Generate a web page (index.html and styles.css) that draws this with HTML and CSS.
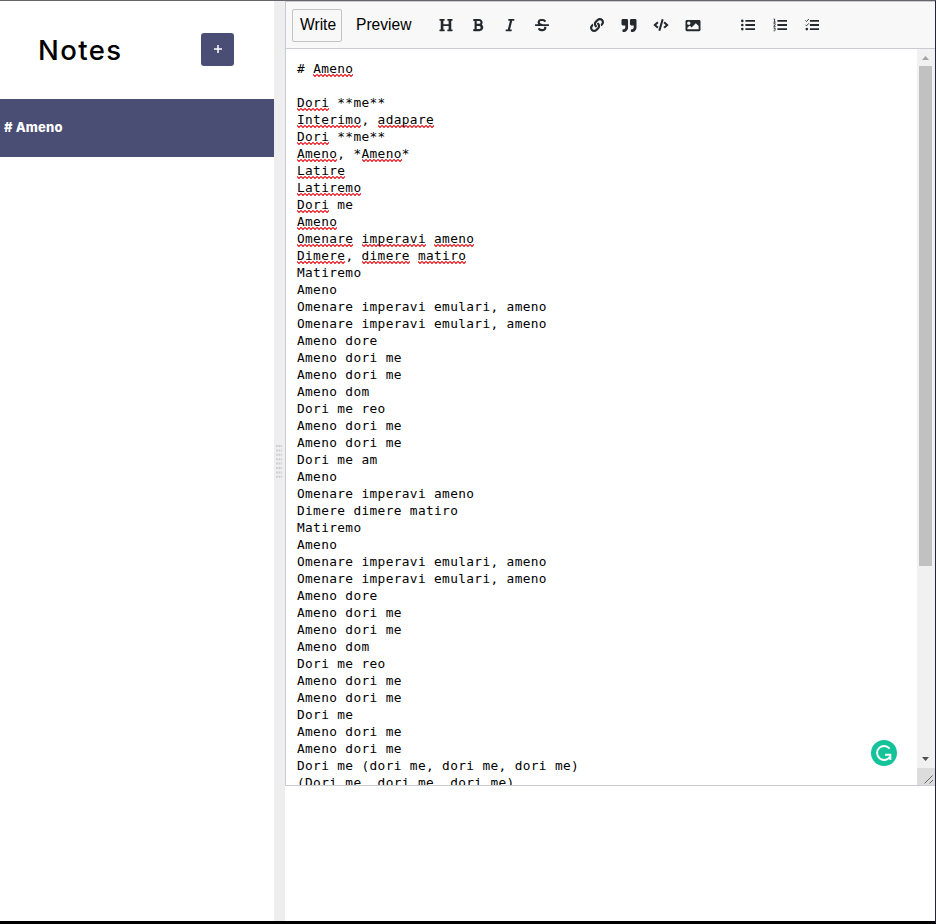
FILE: index.html
```html
<!DOCTYPE html>
<html lang="en">
<head>
<meta charset="utf-8">
<title>Notes</title>
<link rel="stylesheet" href="styles.css">
</head>
<body>
<main class="app">
  <aside class="sidebar">
    <header class="sidebar-header"><h1>Notes</h1><button class="new-note" aria-label="New note"><svg viewBox="0 0 8 8"><path d="M4 0v8M0 4h8"/></svg></button></header>
    <div class="note-title"># Ameno</div>
  </aside>
  <div class="gutter"><svg viewBox="0 0 6 34"><path d="M1 0V34M3.5 0V34M6 0V34"/></svg></div>
  <section class="pane">
    <div class="editor">
      <div class="toolbar">
        <button class="tab selected">Write</button><button class="tab">Preview</button>
        <div class="group">
          <svg viewBox="0 0 512 512"><path d="M448 96v320h32a16 16 0 0 1 16 16v32a16 16 0 0 1-16 16H320a16 16 0 0 1-16-16v-32a16 16 0 0 1 16-16h32V288H160v128h32a16 16 0 0 1 16 16v32a16 16 0 0 1-16 16H32a16 16 0 0 1-16-16v-32a16 16 0 0 1 16-16h32V96H32a16 16 0 0 1-16-16V48a16 16 0 0 1 16-16h160a16 16 0 0 1 16 16v32a16 16 0 0 1-16 16h-32v128h192V96h-32a16 16 0 0 1-16-16V48a16 16 0 0 1 16-16h160a16 16 0 0 1 16 16v32a16 16 0 0 1-16 16z"/></svg>
          <svg viewBox="0 0 384 512"><path d="M333.49 238a122 122 0 0 0 27-65.21C367.87 96.49 308 32 233.42 32H34a16 16 0 0 0-16 16v48a16 16 0 0 0 16 16h31.87v288H34a16 16 0 0 0-16 16v48a16 16 0 0 0 16 16h209.32c70.8 0 134.14-51.75 141-122.4 4.74-48.45-16.39-92.06-50.83-119.6zM145.66 112h87.76a48 48 0 0 1 0 96h-87.76zm87.76 288h-87.76V288h87.76a56 56 0 0 1 0 112z"/></svg>
          <svg viewBox="0 0 320 512"><path d="M320 48v32a16 16 0 0 1-16 16h-62.76l-80 320H208a16 16 0 0 1 16 16v32a16 16 0 0 1-16 16H16a16 16 0 0 1-16-16v-32a16 16 0 0 1 16-16h62.76l80-320H112a16 16 0 0 1-16-16V48a16 16 0 0 1 16-16h192a16 16 0 0 1 16 16z"/></svg>
          <svg viewBox="0 0 512 512"><path d="M496 224H293.9l-87.17-26.83A43.55 43.55 0 0 1 219.55 112h66.79A49.89 49.89 0 0 1 331 139.58a16 16 0 0 0 21.46 7.15l42.94-21.47a16 16 0 0 0 7.16-21.46l-.53-1A128 128 0 0 0 287.51 32h-68a123.68 123.68 0 0 0-123 135.64c2 20.89 10.1 39.83 21.78 56.36H16a16 16 0 0 0-16 16v32a16 16 0 0 0 16 16h480a16 16 0 0 0 16-16v-32a16 16 0 0 0-16-16zm-180.24 96A43 43 0 0 1 336 356.45 43.59 43.59 0 0 1 292.45 400h-66.79A49.89 49.89 0 0 1 181 372.42a16 16 0 0 0-21.46-7.15l-42.94 21.47a16 16 0 0 0-7.16 21.46l.53 1A128 128 0 0 0 224.49 480h68a123.68 123.68 0 0 0 123-135.64 114.25 114.25 0 0 0-5.34-24.36z"/></svg>
        </div>
        <div class="group">
          <svg viewBox="0 0 512 512"><path d="M326.612 185.391c59.747 59.809 58.927 155.698.36 214.59-.11.12-.24.25-.36.37l-67.2 67.2c-59.27 59.27-155.699 59.262-214.96 0-59.27-59.26-59.27-155.7 0-214.96l37.106-37.106c9.84-9.84 26.786-3.3 27.294 10.606.648 17.722 3.826 35.527 9.69 52.721 1.986 5.822.567 12.262-3.783 16.612l-13.087 13.087c-28.026 28.026-28.905 73.66-1.155 101.96 28.024 28.579 74.086 28.749 102.325.51l67.2-67.19c28.191-28.191 28.073-73.757 0-101.83-3.701-3.694-7.429-6.564-10.341-8.569a16.037 16.037 0 0 1-6.947-12.606c-.396-10.567 3.348-21.456 11.698-29.806l21.054-21.055c5.521-5.521 14.182-6.199 20.584-1.731a152.482 152.482 0 0 1 20.522 17.197zM467.547 44.449c-59.261-59.262-155.69-59.27-214.96 0l-67.2 67.2c-.12.12-.25.25-.36.37-58.566 58.892-59.387 154.781.36 214.59a152.454 152.454 0 0 0 20.521 17.196c6.402 4.468 15.064 3.789 20.584-1.731l21.054-21.055c8.35-8.35 12.094-19.239 11.698-29.806a16.037 16.037 0 0 0-6.947-12.606c-2.912-2.005-6.64-4.875-10.341-8.569-28.073-28.073-28.191-73.639 0-101.83l67.2-67.19c28.239-28.239 74.3-28.069 102.325.51 27.75 28.3 26.872 73.934-1.155 101.96l-13.087 13.087c-4.35 4.35-5.769 10.79-3.783 16.612 5.864 17.194 9.042 34.999 9.69 52.721.509 13.906 17.454 20.446 27.294 10.606l37.106-37.106c59.271-59.259 59.271-155.699.001-214.959z"/></svg>
          <svg class="wide" viewBox="0 0 512 512"><path d="M464 32H336c-26.5 0-48 21.5-48 48v128c0 26.5 21.5 48 48 48h80v64c0 35.3-28.7 64-64 64h-8c-13.3 0-24 10.7-24 24v48c0 13.3 10.7 24 24 24h8c88.4 0 160-71.6 160-160V80c0-26.5-21.5-48-48-48zm-288 0H48C21.5 32 0 53.5 0 80v128c0 26.5 21.5 48 48 48h80v64c0 35.3-28.7 64-64 64h-8c-13.3 0-24 10.7-24 24v48c0 13.3 10.7 24 24 24h8c88.4 0 160-71.6 160-160V80c0-26.5-21.5-48-48-48z"/></svg>
          <svg class="code" viewBox="0 0 640 512"><path d="M278.9 511.5l-61-17.7c-6.4-1.8-10-8.5-8.2-14.9L346.2 8.7c1.8-6.4 8.5-10 14.9-8.2l61 17.7c6.4 1.8 10 8.5 8.2 14.9L293.8 503.3c-1.9 6.4-8.5 10.1-14.9 8.2zm-114-112.2l43.5-46.4c4.6-4.9 4.3-12.7-.8-17.2L117 256l90.6-79.7c5.1-4.5 5.5-12.3.8-17.2l-43.5-46.4c-4.5-4.8-12.1-5.1-17-.5L3.8 247.2c-5.1 4.7-5.1 12.8 0 17.5l144.1 135.1c4.9 4.6 12.5 4.4 17-.5zm327.2.6l144.1-135.1c5.1-4.7 5.1-12.8 0-17.5L492.1 112.1c-4.8-4.5-12.4-4.3-17 .5L431.6 159c-4.6 4.9-4.3 12.7.8 17.2L523 256l-90.6 79.7c-5.1 4.5-5.5 12.3-.8 17.2l43.5 46.4c4.5 4.9 12.1 5.1 17 .6z"/></svg>
          <svg class="wide" viewBox="0 0 512 512"><path d="M464 448H48c-26.51 0-48-21.49-48-48V112c0-26.51 21.49-48 48-48h416c26.51 0 48 21.49 48 48v288c0 26.51-21.49 48-48 48zM112 120c-30.928 0-56 25.072-56 56s25.072 56 56 56 56-25.072 56-56-25.072-56-56-56zM64 384h384V272l-87.515-87.515c-4.686-4.686-12.284-4.686-16.971 0L208 320l-55.515-55.515c-4.686-4.686-12.284-4.686-16.971 0L64 336v48z"/></svg>
        </div>
        <div class="group">
          <svg viewBox="0 0 14 14"><path d="M4.4 2h9.6v1.8H4.4zM4.4 6.1h9.6v1.8H4.4zM4.4 10.2h9.6V12H4.4z"/><circle cx="1.3" cy="2.9" r="1.3"/><circle cx="1.3" cy="7" r="1.3"/><circle cx="1.3" cy="11.1" r="1.3"/></svg>
          <svg viewBox="0 0 14 14"><path d="M4.4 2h9.6v1.8H4.4zM4.4 6.1h9.6v1.8H4.4zM4.4 10.2h9.6V12H4.4z"/><path class="line" d="M.6 1h1v3M.4 4.2h2.3M.5 5.7h1.7v.8L.7 8.3h2M.5 10h1.8l-.8 1.1c1.6.1 1 2-.9 1.7"/></svg>
          <svg viewBox="0 0 14 14"><path d="M4.9 2H14v1.8H4.9zM4.9 6.1H14v1.8H4.9zM4.9 10.2H14V12H4.9z"/><circle cx="1.8" cy="11.1" r="1.3"/><path class="line" d="M.3 2.4l1.2 1.2L3.8 1M.3 6.7l1.2 1.2 2.3-2.6"/></svg>
        </div>
      </div>
      <div class="edit-area">
<pre class="text"># <u>Ameno</u>

<u>Dori</u> **me**
<u>Interimo</u>, <u>adapare</u>
<u>Dori</u> **me**
<u>Ameno</u>, *<u>Ameno</u>*
<u>Latire</u>
<u>Latiremo</u>
<u>Dori</u> me
<u>Ameno</u>
<u>Omenare</u> <u>imperavi</u> <u>ameno</u>
<u>Dimere</u>, <u>dimere</u> <u>matiro</u>
Matiremo
Ameno
Omenare imperavi emulari, ameno
Omenare imperavi emulari, ameno
Ameno dore
Ameno dori me
Ameno dori me
Ameno dom
Dori me reo
Ameno dori me
Ameno dori me
Dori me am
Ameno
Omenare imperavi ameno
Dimere dimere matiro
Matiremo
Ameno
Omenare imperavi emulari, ameno
Omenare imperavi emulari, ameno
Ameno dore
Ameno dori me
Ameno dori me
Ameno dom
Dori me reo
Ameno dori me
Ameno dori me
Dori me
Ameno dori me
Ameno dori me
Dori me (dori me, dori me, dori me)
(Dori me, dori me, dori me)</pre>
        <div class="scrollbar">
          <svg class="arrow up" viewBox="0 0 17 17"><path d="M5 11L8.5 7 12 11z"/></svg>
          <div class="thumb"></div>
          <svg class="arrow down" viewBox="0 0 17 17"><path d="M5 6h7l-3.5 4z"/></svg>
          <svg class="resizer" viewBox="0 0 17 17"><path d="M7 15.5l8-8M12 15.5l3.5-3.5"/></svg>
        </div>
        <svg class="assistant" viewBox="0 0 26 26"><circle cx="13" cy="13" r="13"/><path d="M18.6 8.6A7 7 0 1 0 18.8 17M14 14.8h5.3v5.2"/></svg>
      </div>
    </div>
  </section>
</main>
</body>
</html>
```
FILE: styles.css
```css
* { box-sizing: border-box; }
body { margin: 0; background: #fff; color: #000; font-family: "Liberation Sans", Arial, sans-serif; }
.app { display: flex; height: 924px; border-top: 1px solid #67646a; border-right: 1px solid #202638; border-bottom: 3px solid #000; overflow: hidden; }
svg { display: block; }
.sidebar { width: 274px; font-family: Inter, sans-serif; }
.sidebar-header { height: 98px; display: flex; align-items: center; justify-content: space-between; padding: 0 40px 2px 38px; }
h1 { margin: 1px 0 0; font-size: 27.5px; font-weight: 500; letter-spacing: 1.4px; line-height: 34px; }
.new-note { width: 33px; height: 33px; padding: 0; border: 0; border-radius: 3px; background: #4a4e74; display: grid; place-items: center; }
.new-note svg { width: 8px; height: 8px; stroke: #fff; stroke-width: 1.5; }
.note-title { height: 58px; padding-left: 4px; background: #4a4e74; color: #fff; font-size: 13px; font-weight: 800; letter-spacing: .15px; line-height: 57px; }
.gutter { width: 11px; background: #eee; display: flex; align-items: center; justify-content: center; }
.gutter svg { width: 6px; height: 34px; margin: 2px 1px 0 0; stroke: #c9c9c9; stroke-width: 1.6; stroke-dasharray: 2 2.4; fill: none; }
.pane { flex: 1; }
.editor { height: 785px; border: 1px solid #c8ccd0; border-right: 0; display: flex; flex-direction: column; }
.toolbar { height: 47px; flex: none; background: #f8f8f8; border-bottom: 1px solid #c8ccd0; display: flex; align-items: center; padding-left: 6px; }
.tab { height: 33px; padding: 0 7px; border: 1px solid transparent; border-radius: 2px; background: none; color: #000; font: 15.6px/30px "Liberation Sans", Arial, sans-serif; text-align: left; white-space: nowrap; }
.tab.selected { width: 50px; border-color: #c3c3c3; padding: 0 6px 0 7px; }
.tab + .tab { margin-left: 6px; width: 68px; }
.group { display: flex; margin-left: 14px; }
.group + .group { margin-left: 23px; }
.group svg { width: 32px; height: 14px; fill: #24292e; }
.group svg.code { height: 12px; margin-top: 1px; }
.group svg.wide { height: 15px; }
.group .line { fill: none; stroke: #24292e; stroke-width: .9; }
.edit-area { flex: 1; min-height: 0; display: flex; position: relative; }
.text { flex: 1; margin: 0; padding: 11px 11px 0; overflow: hidden; font: 12.8px/17px "DejaVu Sans Mono", monospace; letter-spacing: .356px; }
.text u { text-decoration: none; padding-bottom: 1px; background: url("data:image/svg+xml,%3Csvg xmlns='http://www.w3.org/2000/svg' width='4' height='3'%3E%3Cpath d='M-1 1.5L0 .5 2 2.5 4 .5 5 1.5' fill='none' stroke='%23e51c23' stroke-width='1.2'/%3E%3C/svg%3E") left bottom repeat-x; }
.scrollbar { width: 18px; background: #f1f1f1; display: flex; flex-direction: column; }
.arrow, .resizer { width: 17px; height: 17px; flex: none; }
.arrow { fill: #505050; }
.arrow.up { fill: #a3a3a3; }
.thumb { width: 13px; height: 500px; margin-left: 2px; background: #c1c1c1; }
.arrow.down { margin-top: auto; }
.resizer { width: 18px; background: #dcdcdc; stroke: #666; fill: none; }
.assistant { position: absolute; right: 38px; bottom: 19px; width: 26px; height: 26px; fill: #15c39a; }
.assistant path { fill: none; stroke: #fff; stroke-width: 2; }
```
